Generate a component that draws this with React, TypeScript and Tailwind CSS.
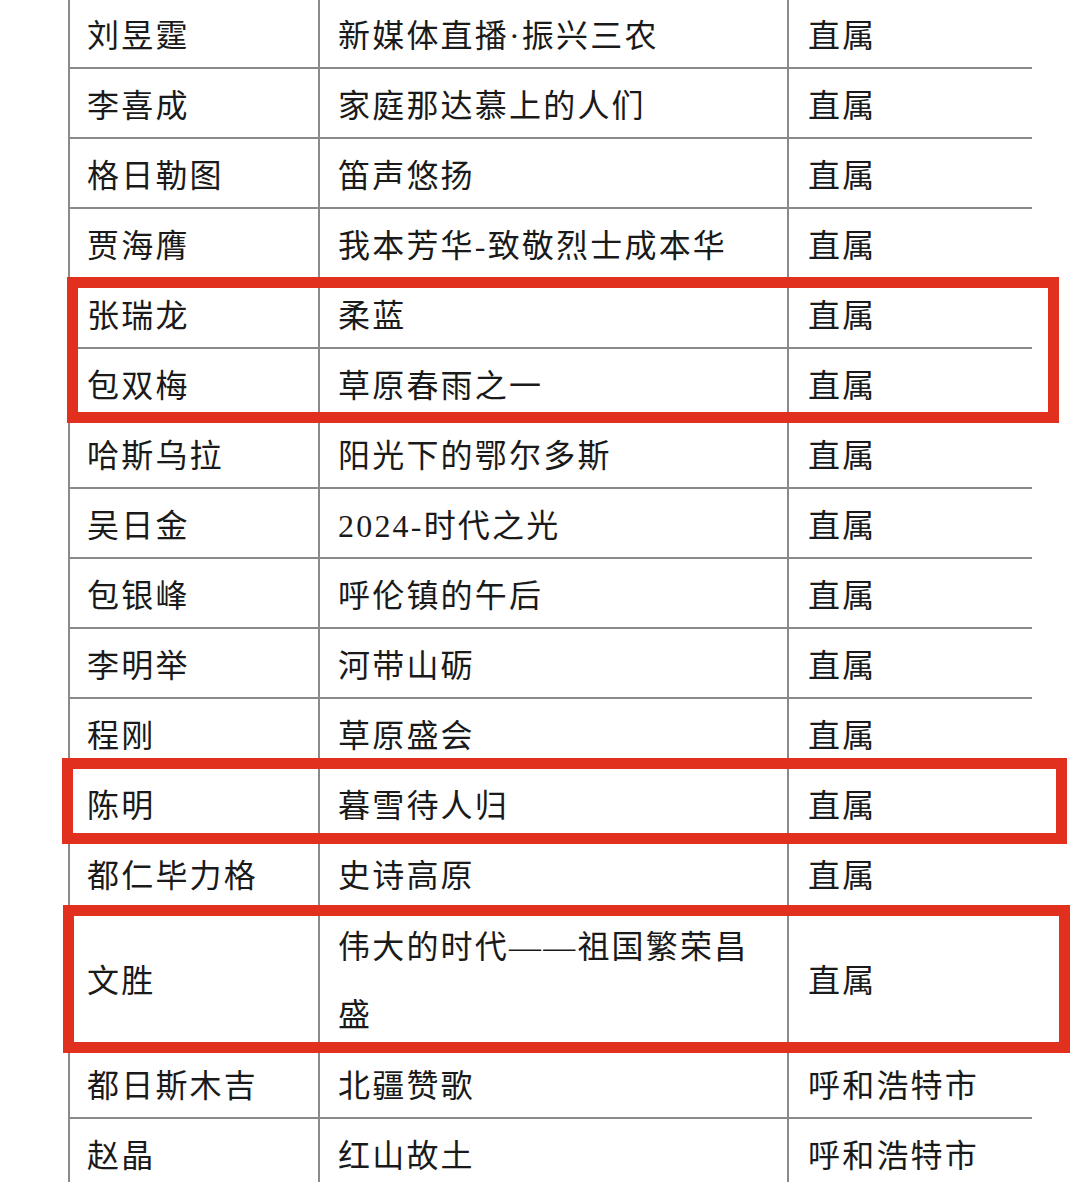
import React from "react";

type Row = { name: string; title: React.ReactNode; unit: string; tall?: boolean };

const rows: Row[] = [
  { name: "刘昱霆", title: "新媒体直播·振兴三农", unit: "直属" },
  { name: "李喜成", title: "家庭那达慕上的人们", unit: "直属" },
  { name: "格日勒图", title: "笛声悠扬", unit: "直属" },
  { name: "贾海膺", title: "我本芳华-致敬烈士成本华", unit: "直属" },
  { name: "张瑞龙", title: "柔蓝", unit: "直属" },
  { name: "包双梅", title: "草原春雨之一", unit: "直属" },
  { name: "哈斯乌拉", title: "阳光下的鄂尔多斯", unit: "直属" },
  { name: "吴日金", title: "2024-时代之光", unit: "直属" },
  { name: "包银峰", title: "呼伦镇的午后", unit: "直属" },
  { name: "李明举", title: "河带山砺", unit: "直属" },
  { name: "程刚", title: "草原盛会", unit: "直属" },
  { name: "陈明", title: "暮雪待人归", unit: "直属" },
  { name: "都仁毕力格", title: "史诗高原", unit: "直属" },
  {
    name: "文胜",
    title: (
      <>
        伟大的时代——祖国繁荣昌
        <br />盛
      </>
    ),
    unit: "直属",
    tall: true,
  },
  { name: "都日斯木吉", title: "北疆赞歌", unit: "呼和浩特市" },
  { name: "赵晶", title: "红山故土", unit: "呼和浩特市" },
];

export default function App() {
  return (
    <div
      className="relative w-[1080px] h-[1182px] overflow-hidden bg-white text-[#1a1a1a]"
      style={{ fontFamily: '"Liberation Serif", "Noto Sans CJK SC", sans-serif' }}
    >
      <div className="ml-[68px] -mt-[3px] w-[964px] border-l-2 border-t-2 border-[#8a8a8a] text-[32px] leading-[68px] tracking-[2.2px]">
        {rows.map((r, i) => (
          <div
            key={i}
            className={`flex border-b-2 border-[#8a8a8a] ${r.tall ? "h-[140px]" : "h-[70px]"}`}
          >
            <div className="w-[250px] shrink-0 border-r-2 border-[#8a8a8a] pl-[17px] pt-[6px] flex items-center">
              <span>{r.name}</span>
            </div>
            <div className="w-[469px] shrink-0 border-r-2 border-[#8a8a8a] pl-[18px] pt-[6px] flex items-center">
              <span>{r.title}</span>
            </div>
            <div className="flex-1 pl-[19px] pt-[6px] flex items-center">
              <span>{r.unit}</span>
            </div>
          </div>
        ))}
      </div>

      <div className="absolute left-[67px] top-[277px] w-[992px] h-[146px] border-[11px] border-[#e2301f]" />
      <div className="absolute left-[62px] top-[758px] w-[1005px] h-[86px] border-[11px] border-[#e2301f]" />
      <div className="absolute left-[63px] top-[905px] w-[1007px] h-[148px] border-[11px] border-[#e2301f]" />
    </div>
  );
}
